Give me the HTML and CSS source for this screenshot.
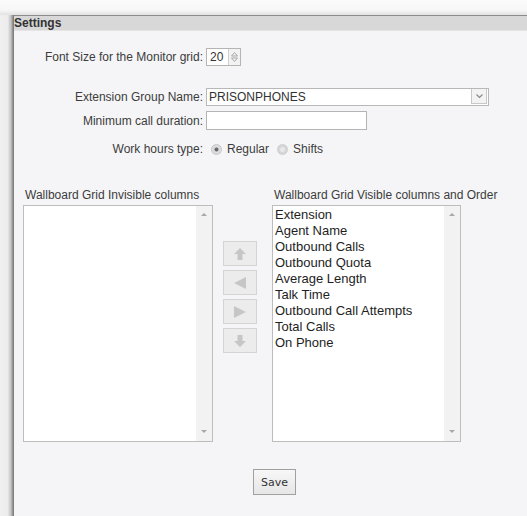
FILE: index.html
```html
<!DOCTYPE html>
<html>
<head>
<meta charset="utf-8">
<title>Settings</title>
<link rel="stylesheet" href="styles.css">
</head>
<body>
<div class="top"></div>
<div class="frame">
  <div class="gutter"></div>
  <div class="panel">
    <div class="title">Settings</div>
    <div class="content">
      <div class="form first">
        <label class="lbl">Font Size for the Monitor grid:</label>
        <div class="spin">
          <span class="spin-val">20</span>
          <span class="spin-btn">
            <svg width="11" height="16" viewBox="0 0 11 16">
              <path d="M2.5 7 L5.5 3.5 L8.5 7 Z" fill="none" stroke="#a9a9a9" stroke-width="1"/>
              <path d="M2.5 9 L5.5 12.5 L8.5 9 Z" fill="none" stroke="#a9a9a9" stroke-width="1"/>
            </svg>
          </span>
        </div>
      </div>

      <div class="form second">
        <label class="lbl">Extension Group Name:</label>
        <div class="select">
          <span class="select-val">PRISONPHONES</span>
          <span class="select-btn">
            <svg width="9" height="6" viewBox="0 0 9 6"><path d="M1.5 1.5 L4.5 4.5 L7.5 1.5" fill="none" stroke="#8a8a8a" stroke-width="1.2"/></svg>
          </span>
        </div>
        <label class="lbl">Minimum call duration:</label>
        <div class="text"></div>
        <label class="lbl">Work hours type:</label>
        <div class="radios">
          <span class="radio on"></span><span class="rtxt">Regular</span>
          <span class="radio"></span><span class="rtxt">Shifts</span>
        </div>
      </div>

      <div class="columns">
        <div class="col">
          <div class="col-title">Wallboard Grid Invisible columns</div>
          <div class="listbox left">
            <div class="items"></div>
            <div class="sbar"><span class="sup"></span><span class="sdown"></span></div>
          </div>
        </div>
        <div class="movers">
          <span class="mv">
            <svg width="14" height="14" viewBox="0 0 14 14"><path d="M7 1 L13 7 L9.5 7 L9.5 13 L4.5 13 L4.5 7 L1 7 Z" fill="#c6c6c6"/></svg>
          </span>
          <span class="mv">
            <svg width="14" height="14" viewBox="0 0 14 14"><path d="M1 7 L13 1 L13 13 Z" fill="#c6c6c6"/></svg>
          </span>
          <span class="mv">
            <svg width="14" height="14" viewBox="0 0 14 14"><path d="M13 7 L1 1 L1 13 Z" fill="#c6c6c6"/></svg>
          </span>
          <span class="mv">
            <svg width="14" height="14" viewBox="0 0 14 14"><path d="M7 13 L13 7 L9.5 7 L9.5 1 L4.5 1 L4.5 7 L1 7 Z" fill="#c6c6c6"/></svg>
          </span>
        </div>
        <div class="col">
          <div class="col-title">Wallboard Grid Visible columns and Order</div>
          <div class="listbox right">
            <div class="items">
              <div>Extension</div>
              <div>Agent Name</div>
              <div>Outbound Calls</div>
              <div>Outbound Quota</div>
              <div>Average Length</div>
              <div>Talk Time</div>
              <div>Outbound Call Attempts</div>
              <div>Total Calls</div>
              <div>On Phone</div>
            </div>
            <div class="sbar"><span class="sup"></span><span class="sdown"></span></div>
          </div>
        </div>
      </div>

      <div class="actions">
        <button class="save">Save</button>
      </div>
    </div>
  </div>
</div>
</body>
</html>
```

FILE: styles.css
```css
html, body {
  margin: 0;
  padding: 0;
  height: 100%;
  overflow: hidden;
}

body {
  background: #f9f9f9;
  font-family: "Liberation Sans", Arial, sans-serif;
  font-size: 12px;
  color: #333;
}

.top {
  height: 15px;
  background: linear-gradient(#fbfbfb 0, #f7f7f7 10px, #e2e2e2 15px);
}

.frame {
  display: flex;
  height: 501px;
}

.gutter {
  width: 13px;
  background: linear-gradient(to right, #f0f0f0 0, #ececec 8px, #d8d8d8 9px, #c4c4c4 11px, #a2a2a2 12px, #8a8a8a 13px);
}

.panel {
  flex: 1;
  background: #f5f5f7;
  border-left: 1px solid #7e7e7e;
  border-top: 1px solid #8c8c8c;
}

.title {
  height: 14px;
  line-height: 14px;
  background: #d8d8d8;
  border-bottom: 1px solid #e4e4e4;
  font-weight: bold;
  color: #333;
}

/* label / control rows */
.form {
  display: grid;
  grid-template-columns: 189px auto;
  column-gap: 3px;
  align-items: center;
  justify-items: start;
}

.lbl {
  justify-self: end;
  color: #3c3c3c;
  white-space: nowrap;
}

.form.first {
  margin-top: 17px;
}

.form.second {
  margin-top: 22px;
  row-gap: 5px;
  grid-template-rows: 18px 19px 28px;
}

.spin {
  display: flex;
  height: 16px;
  width: 33px;
  border: 1px solid #b4b4b4;
  background: #fff;
}

.spin-val {
  flex: 1;
  line-height: 16px;
  padding-left: 3px;
  color: #333;
}

.spin-btn {
  width: 11px;
  border-left: 1px solid #cfcfcf;
  background: #f2f2f2;
  display: flex;
  align-items: center;
  justify-content: center;
}

.select {
  display: flex;
  width: 281px;
  height: 16px;
  border: 1px solid #b8b8b8;
  background: #fff;
}

.select-val {
  flex: 1;
  line-height: 16px;
  padding-left: 2px;
  color: #333;
}

.select-btn {
  width: 14px;
  margin: 0 1px 1px 0;
  border: 1px solid #c8c8c8;
  border-top: none;
  background: #f3f3f3;
  display: flex;
  align-items: center;
  justify-content: center;
}

.text {
  width: 159px;
  height: 17px;
  border: 1px solid #b4b4b4;
  background: #fff;
}

.radios {
  display: flex;
  align-items: center;
  padding-left: 5px;
}

.radio {
  width: 9px;
  height: 9px;
  border-radius: 50%;
  background: radial-gradient(circle, #e8e8e8 0 2px, #d6d6d6 3px);
  border: 1px solid #cdcdcd;
  margin-right: 5px;
}

.radio.on {
  background: radial-gradient(circle, #6a6a6a 0 1.6px, #dcdcdc 2.4px);
  border-color: #c6c6c6;
}

.rtxt {
  margin-right: 8px;
  color: #3c3c3c;
}

/* column chooser */
.columns {
  display: flex;
  margin-top: 25px;
  padding-left: 9px;
}

.col-title {
  height: 14px;
  line-height: 14px;
  padding-left: 2px;
  margin-bottom: 3px;
  color: #3c3c3c;
  white-space: nowrap;
  width: 0;
}

.listbox {
  display: flex;
  height: 235px;
  border: 1px solid #bdbdbd;
  background: #fff;
}

.listbox.left {
  width: 188px;
}

.listbox.right {
  width: 187px;
}

.items {
  flex: 1;
  padding: 1px 0 0 2px;
  font-size: 13px;
  line-height: 16px;
  color: #1e1e1e;
}

.sbar {
  width: 16px;
  background: #f2f2f2;
  display: flex;
  flex-direction: column;
  justify-content: space-between;
  align-items: center;
  padding: 7px 0 8px;
}

.sup, .sdown {
  width: 0;
  height: 0;
  border-left: 3px solid transparent;
  border-right: 3px solid transparent;
}

.sup {
  border-bottom: 3px solid #a8a8a8;
}

.sdown {
  border-top: 3px solid #a8a8a8;
}

.movers {
  display: flex;
  flex-direction: column;
  gap: 4px;
  margin: 53px 15px 0 10px;
}

.mv {
  width: 32px;
  height: 23px;
  border: 1px solid #d4d4d4;
  background: #ececec;
  display: flex;
  align-items: center;
  justify-content: center;
}

.actions {
  margin-top: 27px;
  padding-left: 239px;
}

.save {
  width: 43px;
  height: 26px;
  padding: 0;
  border: 1px solid #a0a0a0;
  background: linear-gradient(#f7f7f7, #e6e6e6);
  font-family: "DejaVu Sans", sans-serif;
  font-size: 11px;
  color: #333;
}
```
